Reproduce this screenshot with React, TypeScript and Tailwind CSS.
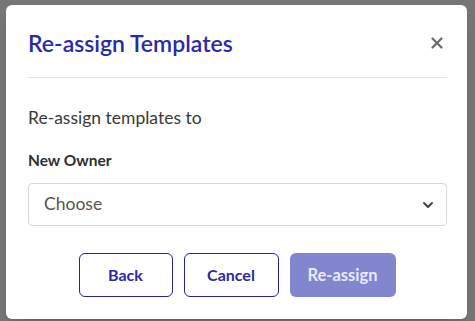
import { X, ChevronDown } from "lucide-react";

const ReassignDialog = () => {
  return (
    <div className="h-[314px] w-[461px] rounded-md bg-white pl-[22px] pr-[20px] pt-[24px] shadow-lg">
      <div className="flex h-[28px] items-center justify-between">
        <h2 className="text-[23px] font-semibold leading-[28px] text-[#2a2aa8]">Re-assign Templates</h2>
        <button type="button" className="mr-[1px] text-[#6b6b6b]">
          <X size={18} strokeWidth={3} />
        </button>
      </div>
      <div className="mt-[20px] h-px bg-[#e3e5ea]" />

      <p className="mt-[28px] text-[17.5px] leading-[24px] text-[#3a3a3a]">Re-assign templates to</p>

      <label className="mt-[20px] block text-[15.5px] font-bold leading-[20px] text-[#2f2f2f]">New Owner</label>
      <div className="mt-[13px] flex h-[43px] items-center justify-between rounded border border-[#d5d8de] pl-[15px] pr-[10px]">
        <span className="text-[17.5px] text-[#555]">Choose</span>
        <ChevronDown size={16} strokeWidth={3} className="text-[#444]" />
      </div>

      <div className="mt-[27px] flex justify-center gap-[11px] pr-[1px]">
        <button
          type="button"
          className="h-[44px] w-[94px] rounded-md border border-[#2323a0] text-[16px] font-bold text-[#2a2aa8]"
        >
          Back
        </button>
        <button
          type="button"
          className="h-[44px] w-[95px] rounded-md border border-[#2323a0] text-[16px] font-bold text-[#2a2aa8]"
        >
          Cancel
        </button>
        <button
          type="button"
          disabled
          className="h-[44px] w-[106px] rounded-md bg-[#8286cf] text-[16.5px] font-bold text-[#e8e9f7]"
        >
          Re-assign
        </button>
      </div>
    </div>
  );
};

export default function App() {
  return (
    <div
      className="h-[321px] w-[475px] overflow-hidden bg-[#767676] pl-[6px] pt-[5px]"
      style={{ fontFamily: "Lato, 'Noto Sans', sans-serif" }}
    >
      <ReassignDialog />
    </div>
  );
}
